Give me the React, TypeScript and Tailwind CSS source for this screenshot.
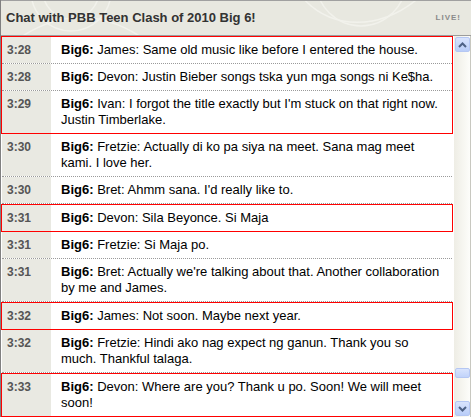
import React from "react";

type Msg = { t: string; who: string; text: string };
type Group = { red: boolean; items: Msg[] };

const groups: Group[] = [
  {
    red: true,
    items: [
      { t: "3:28", who: "James", text: "Same old music like before I entered the house." },
      { t: "3:28", who: "Devon", text: "Justin Bieber songs tska yun mga songs ni Ke$ha." },
      { t: "3:29", who: "Ivan", text: "I forgot the title exactly but I'm stuck on that right now. Justin Timberlake." },
    ],
  },
  {
    red: false,
    items: [
      { t: "3:30", who: "Fretzie", text: "Actually di ko pa siya na meet. Sana mag meet kami. I love her." },
      { t: "3:30", who: "Bret", text: "Ahmm sana. I'd really like to." },
    ],
  },
  { red: true, items: [{ t: "3:31", who: "Devon", text: "Sila Beyonce. Si Maja" }] },
  {
    red: false,
    items: [
      { t: "3:31", who: "Fretzie", text: "Si Maja po." },
      { t: "3:31", who: "Bret", text: "Actually we're talking about that. Another collaboration by me and James." },
    ],
  },
  { red: true, items: [{ t: "3:32", who: "James", text: "Not soon. Maybe next year." }] },
  {
    red: false,
    items: [
      { t: "3:32", who: "Fretzie", text: "Hindi ako nag expect ng ganun. Thank you so much. Thankful talaga." },
    ],
  },
  { red: true, items: [{ t: "3:33", who: "Devon", text: "Where are you? Thank u po. Soon! We will meet soon!" }] },
];

function Row({ m, last }: { m: Msg; last: boolean }) {
  return (
    <div className={"flex " + (last ? "" : "border-b border-dotted border-[#9a9a9a]")}>
      <div className="w-[49px] shrink-0 bg-[#e9e9e2] pl-[5px] py-[5px] text-[12px] leading-[16px] font-bold text-[#555]">
        {m.t}
      </div>
      <div className="flex-1 bg-white pl-[10px] pr-[6px] py-[5px] text-[13px] leading-[16px] text-black">
        <span className="font-bold">Big6:</span> {m.who}: {m.text}
      </div>
    </div>
  );
}

function Chevron({ up }: { up: boolean }) {
  return (
    <svg width="9" height="6" viewBox="0 0 9 6">
      <path
        d={up ? "M1 5 L4.5 1.5 L8 5" : "M1 1 L4.5 4.5 L8 1"}
        fill="none"
        stroke="#4d6185"
        strokeWidth="2"
      />
    </svg>
  );
}

export default function App() {
  return (
    <div
      className="w-[471px] h-[417px] overflow-hidden flex flex-col bg-[#e9e9e2] border-l border-[#808080]"
      style={{ fontFamily: '"Liberation Sans", Arial, sans-serif' }}
    >
      <div className="relative h-[36px] shrink-0 flex items-center justify-between pl-[5px] pr-[10px] border-t border-[#a0a0a0] border-b border-b-[#9c9c9c] bg-[#e8e8e0] overflow-hidden">
        <svg className="absolute left-0 top-0" width="471" height="36" viewBox="0 0 471 36">
          <g fill="none" stroke="#f2f2ec" strokeWidth="1.5">
            <circle cx="70" cy="-10" r="40" />
            <circle cx="70" cy="-10" r="28" />
            <path d="M20 36 C60 10 100 10 140 36" />
            <path d="M300 -5 C330 30 380 30 420 -5" />
            <circle cx="360" cy="-20" r="45" />
          </g>
        </svg>
        <span className="relative text-[13px] font-bold text-[#333]">Chat with PBB Teen Clash of 2010 Big 6!</span>
        <span className="relative text-[8px] font-bold text-[#8a8a8a] tracking-[1px]">LIVE!</span>
      </div>
      <div className="flex flex-1 min-h-0 bg-white">
        <div className="flex-1 min-w-0 overflow-hidden pr-[1px]">
          {groups.map((g, gi) => (
            <div key={gi} className={g.red ? "border border-[#ff0000]" : "border-x border-transparent"}>
              {g.items.map((m, i) => (
                <Row key={i} m={m} last={g.red && i === g.items.length - 1} />
              ))}
              {!g.red && null}
            </div>
          ))}
        </div>
        <div className="w-[17px] shrink-0 flex flex-col items-center pt-[1px] pb-[1px] bg-gradient-to-r from-[#eeede5] to-[#fdfdfa] border-r border-[#c8c8c0]">
          <div className="w-[15px] h-[15px] rounded-[2px] border border-[#b5c7f3] bg-gradient-to-b from-[#d9e4fd] to-[#b9cdf8] flex items-center justify-center">
            <Chevron up />
          </div>
          <div className="flex-1" />
          <div className="w-[15px] h-[10px] rounded-[2px] border border-[#b5c7f3] bg-gradient-to-b from-[#d9e4fd] to-[#c1d3fa]" />
          <div className="h-[23px]" />
          <div className="w-[15px] h-[15px] rounded-[2px] border border-[#b5c7f3] bg-gradient-to-b from-[#d9e4fd] to-[#b9cdf8] flex items-center justify-center">
            <Chevron up={false} />
          </div>
        </div>
      </div>
    </div>
  );
}
